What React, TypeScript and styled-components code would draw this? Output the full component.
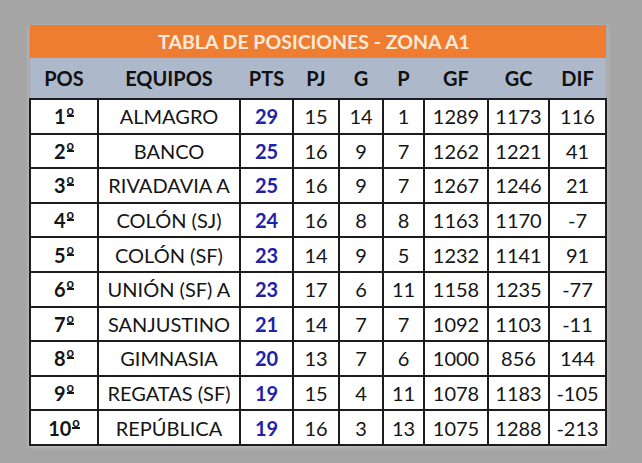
import React from 'react';
import styled, { createGlobalStyle } from 'styled-components';

const GlobalStyle = createGlobalStyle`
  html, body {
    margin: 0;
    padding: 0;
    background: #a5a5a5;
  }
  body {
    font-family: Lato, "Open Sans", "Noto Sans", sans-serif;
  }
`;

const Page = styled.div`
  width: 642px;
  height: 463px;
  padding: 25px 0 0 29px;
  box-sizing: border-box;
`;

const Table = styled.table`
  width: 576px;
  border-collapse: collapse;
  table-layout: fixed;
  box-shadow: 0 1px 4px rgba(255, 255, 255, 0.35);
`;

const TitleCell = styled.th`
  height: 33px;
  padding: 0 8px 0 0;
  background: #ee7d31;
  color: #fde9d9;
  font-size: 19.5px;
  font-weight: 700;
  text-align: center;
  vertical-align: middle;
`;

const HeadCell = styled.th`
  height: 40px;
  padding: 0;
  background: #adb9ca;
  color: #111;
  font-size: 20px;
  font-weight: 700;
  text-align: center;
  vertical-align: middle;
`;

const Row = styled.tr`
  height: 34.6px;
`;

const Cell = styled.td<{ $bold?: boolean; $blue?: boolean }>`
  padding: 0;
  background: #fff;
  border: 2px solid #1c1c1c;
  color: ${(p) => (p.$blue ? '#2121a8' : '#151515')};
  font-size: 20px;
  font-weight: ${(p) => (p.$bold || p.$blue ? 700 : 400)};
  text-align: center;
  vertical-align: middle;
  white-space: nowrap;
  overflow: hidden;
`;

// masculine ordinal drawn as a raised "o" with a bar under it
const Ordinal = styled.span`
  display: inline-block;
  margin-left: 1px;
  font-size: 13px;
  line-height: 8px;
  height: 8px;
  padding-bottom: 1px;
  border-bottom: 2px solid currentColor;
  vertical-align: 9px;
`;

const widths = [68, 142, 53, 46, 44, 41, 64, 61, 57];
const headers = ['POS', 'EQUIPOS', 'PTS', 'PJ', 'G', 'P', 'GF', 'GC', 'DIF'];

const rows: [number, string, number, number, number, number, number, number, number][] = [
  [1, 'ALMAGRO', 29, 15, 14, 1, 1289, 1173, 116],
  [2, 'BANCO', 25, 16, 9, 7, 1262, 1221, 41],
  [3, 'RIVADAVIA A', 25, 16, 9, 7, 1267, 1246, 21],
  [4, 'COLÓN (SJ)', 24, 16, 8, 8, 1163, 1170, -7],
  [5, 'COLÓN (SF)', 23, 14, 9, 5, 1232, 1141, 91],
  [6, 'UNIÓN (SF) A', 23, 17, 6, 11, 1158, 1235, -77],
  [7, 'SANJUSTINO', 21, 14, 7, 7, 1092, 1103, -11],
  [8, 'GIMNASIA', 20, 13, 7, 6, 1000, 856, 144],
  [9, 'REGATAS (SF)', 19, 15, 4, 11, 1078, 1183, -105],
  [10, 'REPÚBLICA', 19, 16, 3, 13, 1075, 1288, -213],
];

export default function App() {
  return (
    <>
      <GlobalStyle />
      <Page>
        <Table>
          <colgroup>
            {widths.map((w, i) => (
              <col key={i} style={{ width: w }} />
            ))}
          </colgroup>
          <thead>
            <tr>
              <TitleCell colSpan={9}>TABLA DE POSICIONES - ZONA A1</TitleCell>
            </tr>
            <tr>
              {headers.map((h) => (
                <HeadCell key={h}>{h}</HeadCell>
              ))}
            </tr>
          </thead>
          <tbody>
            {rows.map((r) => (
              <Row key={r[0]}>
                <Cell $bold>
                  {r[0]}
                  <Ordinal aria-label="º">o</Ordinal>
                </Cell>
                <Cell>{r[1]}</Cell>
                <Cell $blue>{r[2]}</Cell>
                {r.slice(3).map((v, i) => (
                  <Cell key={i}>{v}</Cell>
                ))}
              </Row>
            ))}
          </tbody>
        </Table>
      </Page>
    </>
  );
}
